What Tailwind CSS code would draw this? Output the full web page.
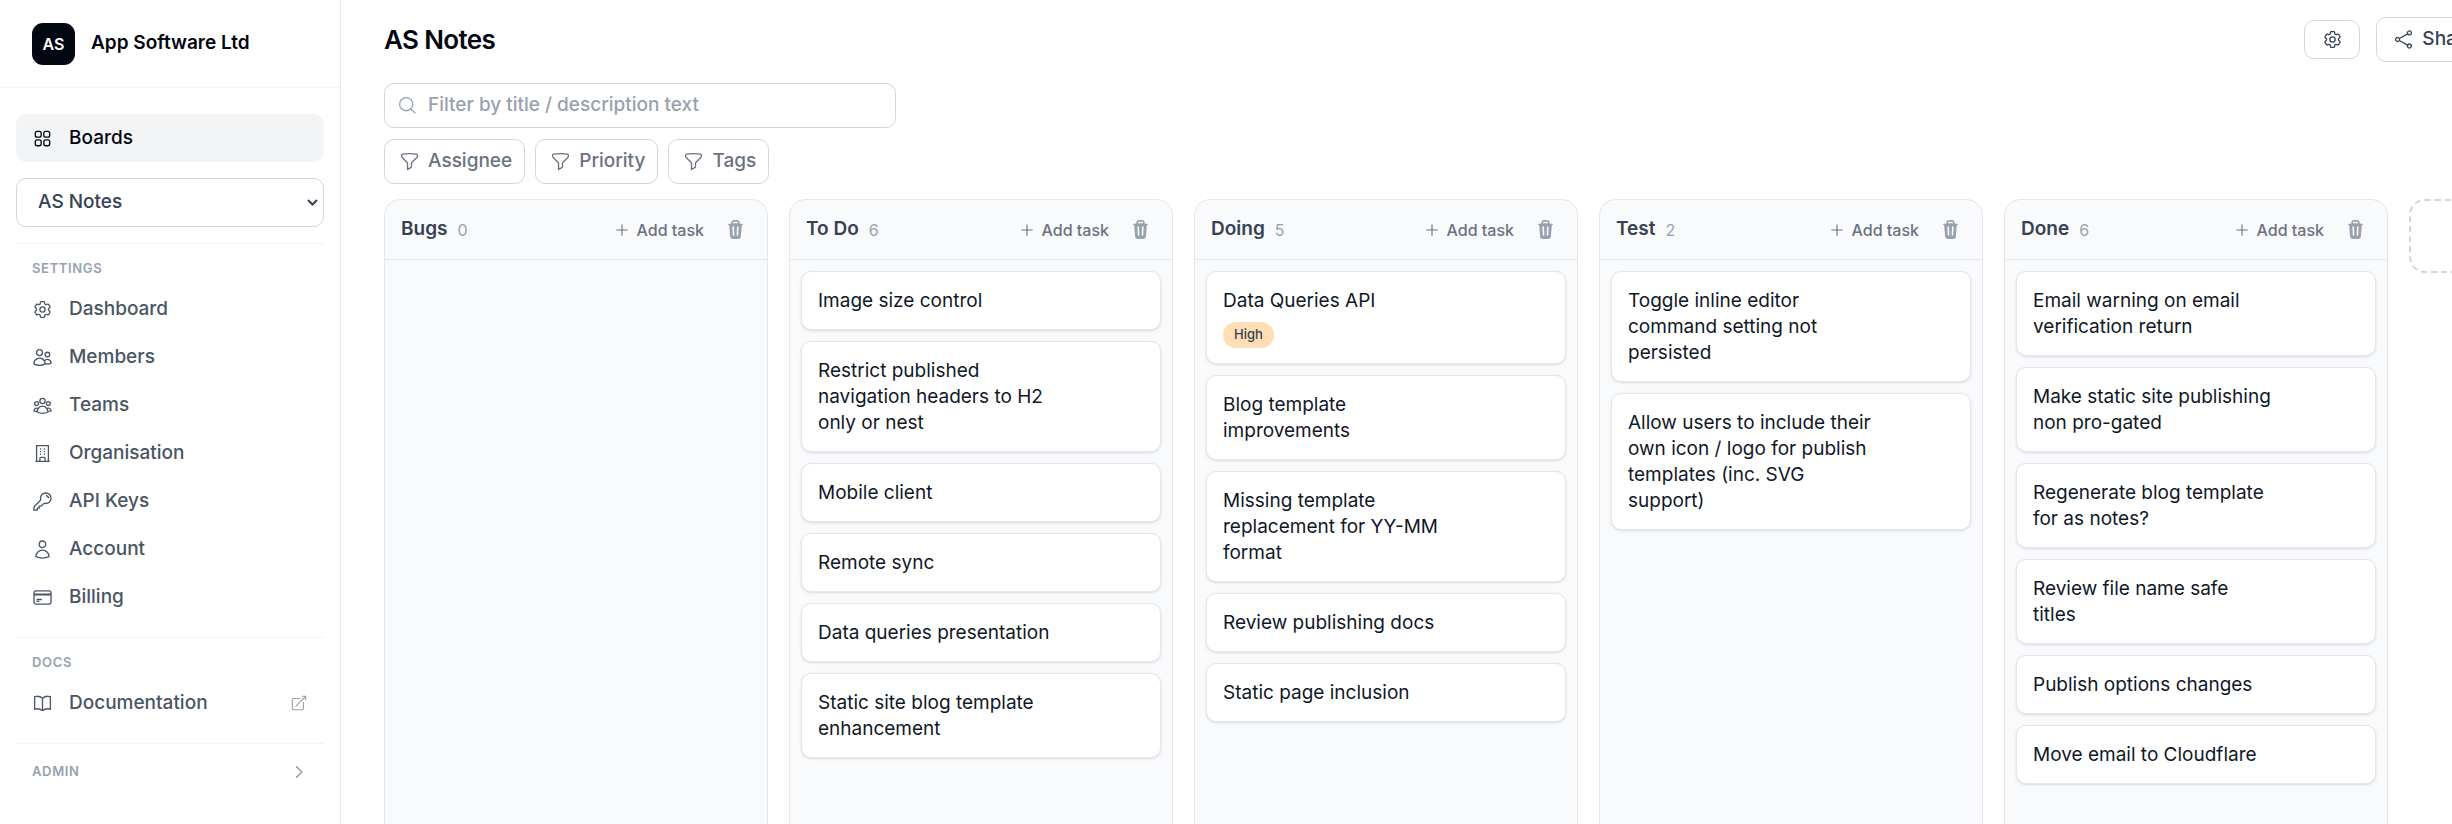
<!DOCTYPE html>
<html lang="en">
<head>
  <meta charset="UTF-8">
  <meta name="viewport" content="width=device-width, initial-scale=1.0">
  <title>AS Notes</title>
  <script src="https://cdn.jsdelivr.net/npm/@tailwindcss/browser@4"></script>
</head>
<body class="h-screen flex overflow-hidden bg-white font-['Inter',sans-serif] text-[19px] text-gray-950">

  <!-- Icon sprite -->
  <svg class="hidden" aria-hidden="true">
    <symbol id="i-grid" viewBox="0 0 24 24"><path d="M3.75 6A2.25 2.25 0 0 1 6 3.75h2.25A2.25 2.25 0 0 1 10.5 6v2.25a2.25 2.25 0 0 1-2.25 2.25H6a2.25 2.25 0 0 1-2.25-2.25V6ZM3.75 15.75A2.25 2.25 0 0 1 6 13.5h2.25a2.25 2.25 0 0 1 2.25 2.25V18a2.25 2.25 0 0 1-2.25 2.25H6A2.25 2.25 0 0 1 3.75 18v-2.25ZM13.5 6a2.25 2.25 0 0 1 2.25-2.25H18A2.25 2.25 0 0 1 20.25 6v2.25A2.25 2.25 0 0 1 18 10.5h-2.25a2.25 2.25 0 0 1-2.25-2.25V6ZM13.5 15.75a2.25 2.25 0 0 1 2.25-2.25H18a2.25 2.25 0 0 1 2.25 2.25V18A2.25 2.25 0 0 1 18 20.25h-2.25A2.25 2.25 0 0 1 13.5 18v-2.25Z"/></symbol>
    <symbol id="i-cog" viewBox="0 0 24 24"><path d="M9.594 3.94c.09-.542.56-.94 1.11-.94h2.593c.55 0 1.02.398 1.11.94l.213 1.281c.063.374.313.686.645.87.074.04.147.083.22.127.325.196.72.257 1.075.124l1.217-.456a1.125 1.125 0 0 1 1.37.49l1.296 2.247a1.125 1.125 0 0 1-.26 1.431l-1.003.827c-.293.241-.438.613-.43.992a7.723 7.723 0 0 1 0 .255c-.008.378.137.75.43.991l1.004.827c.424.35.534.955.26 1.43l-1.298 2.247a1.125 1.125 0 0 1-1.369.491l-1.217-.456c-.355-.133-.75-.072-1.076.124a6.47 6.47 0 0 1-.22.128c-.331.183-.581.495-.644.869l-.213 1.281c-.09.543-.56.94-1.11.94h-2.594c-.55 0-1.019-.398-1.11-.94l-.213-1.281c-.062-.374-.312-.686-.644-.87a6.52 6.52 0 0 1-.22-.127c-.325-.196-.72-.257-1.076-.124l-1.217.456a1.125 1.125 0 0 1-1.369-.49l-1.297-2.247a1.125 1.125 0 0 1 .26-1.431l1.004-.827c.292-.24.437-.613.43-.991a6.932 6.932 0 0 1 0-.255c.007-.38-.138-.751-.43-.992l-1.004-.827a1.125 1.125 0 0 1-.26-1.43l1.297-2.247a1.125 1.125 0 0 1 1.37-.491l1.216.456c.356.133.751.072 1.076-.124.072-.044.146-.086.22-.128.332-.183.582-.495.644-.869l.214-1.28Z"/><circle cx="12" cy="12" r="3"/></symbol>
    <symbol id="i-users" viewBox="0 0 24 24"><path d="M15 19.128a9.38 9.38 0 0 0 2.625.372 9.337 9.337 0 0 0 4.121-.952 4.125 4.125 0 0 0-7.533-2.493M15 19.128v-.003c0-1.113-.285-2.16-.786-3.07M15 19.128v.106A12.318 12.318 0 0 1 8.624 21c-2.331 0-4.512-.645-6.374-1.766l-.001-.109a6.375 6.375 0 0 1 11.964-3.07M12 6.375a3.375 3.375 0 1 1-6.75 0 3.375 3.375 0 0 1 6.75 0Zm8.25 2.25a2.625 2.625 0 1 1-5.25 0 2.625 2.625 0 0 1 5.25 0Z"/></symbol>
    <symbol id="i-group" viewBox="0 0 24 24"><path d="M18 18.72a9.094 9.094 0 0 0 3.741-.479 3 3 0 0 0-4.682-2.72m.94 3.198.001.031c0 .225-.012.447-.037.666A11.944 11.944 0 0 1 12 21c-2.17 0-4.207-.576-5.963-1.584A6.062 6.062 0 0 1 6 18.719m12 0a5.971 5.971 0 0 0-.941-3.197m0 0A5.995 5.995 0 0 0 12 12.75a5.995 5.995 0 0 0-5.058 2.772m0 0a3 3 0 0 0-4.681 2.72 8.986 8.986 0 0 0 3.74.477m.94-3.197a5.971 5.971 0 0 0-.94 3.197M15 6.75a3 3 0 1 1-6 0 3 3 0 0 1 6 0Zm6 3a2.25 2.25 0 1 1-4.5 0 2.25 2.25 0 0 1 4.5 0Zm-13.5 0a2.25 2.25 0 1 1-4.5 0 2.25 2.25 0 0 1 4.5 0Z"/></symbol>
    <symbol id="i-building" viewBox="0 0 24 24"><path d="M3.75 21h16.5M4.5 3h15M5.25 3v18m13.5-18v18M9 6.75h1.5m-1.5 3h1.5m-1.5 3h1.5m3-6H15m-1.5 3H15m-1.5 3H15M9 21v-3.375c0-.621.504-1.125 1.125-1.125h3.75c.621 0 1.125.504 1.125 1.125V21"/></symbol>
    <symbol id="i-key" viewBox="0 0 24 24"><path d="M15.75 5.25a3 3 0 0 1 3 3m3 0a6 6 0 0 1-7.029 5.912c-.563-.097-1.159.026-1.563.43L10.5 17.25H8.25v2.25H6v2.25H2.25v-2.818c0-.597.237-1.17.659-1.591l6.499-6.499c.404-.404.527-1 .43-1.563A6 6 0 1 1 21.75 8.25Z"/></symbol>
    <symbol id="i-user" viewBox="0 0 24 24"><path d="M15.75 6a3.75 3.75 0 1 1-7.5 0 3.75 3.75 0 0 1 7.5 0ZM4.501 20.118a7.5 7.5 0 0 1 14.998 0A17.933 17.933 0 0 1 12 21.75c-2.676 0-5.216-.584-7.499-1.632Z"/></symbol>
    <symbol id="i-card" viewBox="0 0 24 24"><path d="M2.25 8.25h19.5M2.25 9h19.5m-16.5 5.25h6m-6 2.25h3m-3.75 3h15a2.25 2.25 0 0 0 2.25-2.25V6.75A2.25 2.25 0 0 0 19.5 4.5h-15a2.25 2.25 0 0 0-2.25 2.25v10.5A2.25 2.25 0 0 0 4.5 19.5Z"/></symbol>
    <symbol id="i-book" viewBox="0 0 24 24"><path d="M12 6.042A8.967 8.967 0 0 0 6 3.75c-1.052 0-2.062.18-3 .512v14.25A8.987 8.987 0 0 1 6 18c2.305 0 4.408.867 6 2.292m0-14.25a8.966 8.966 0 0 1 6-2.292c1.052 0 2.062.18 3 .512v14.25A8.987 8.987 0 0 0 18 18a8.967 8.967 0 0 0-6 2.292m0-14.25v14.25"/></symbol>
    <symbol id="i-external" viewBox="0 0 24 24"><path d="M13.5 6H5.25A2.25 2.25 0 0 0 3 8.25v10.5A2.25 2.25 0 0 0 5.25 21h10.5A2.25 2.25 0 0 0 18 18.75V10.5m-10.5 6L21 3m0 0h-5.25M21 3v5.25"/></symbol>
    <symbol id="i-right" viewBox="0 0 24 24"><path d="m8.25 4.5 7.5 7.5-7.5 7.5"/></symbol>
    <symbol id="i-search" viewBox="0 0 24 24"><path d="m21 21-5.197-5.197m0 0A7.5 7.5 0 1 0 5.196 5.196a7.5 7.5 0 0 0 10.607 10.607Z"/></symbol>
    <symbol id="i-funnel" viewBox="0 0 24 24"><path d="M12 3c2.755 0 5.455.232 8.083.678.533.09.917.556.917 1.096v1.044a2.25 2.25 0 0 1-.659 1.591l-5.432 5.432a2.25 2.25 0 0 0-.659 1.591v2.927a2.25 2.25 0 0 1-1.244 2.013L9.75 21v-6.568a2.25 2.25 0 0 0-.659-1.591L3.659 7.409A2.25 2.25 0 0 1 3 5.818V4.774c0-.54.384-1.006.917-1.096A48.32 48.32 0 0 1 12 3Z"/></symbol>
    <symbol id="i-share" viewBox="0 0 24 24"><path d="M7.217 10.907a2.25 2.25 0 1 0 0 2.186m0-2.186c.18.324.283.696.283 1.093s-.103.77-.283 1.093m0-2.186 9.566-5.314m-9.566 7.5 9.566 5.314m0 0a2.25 2.25 0 1 0 3.935 2.186 2.25 2.25 0 0 0-3.935-2.186Zm0-12.814a2.25 2.25 0 1 0 3.933-2.185 2.25 2.25 0 0 0-3.933 2.185Z"/></symbol>
    <symbol id="i-plus" viewBox="0 0 24 24"><path d="M12 4.5v15m7.5-7.5h-15"/></symbol>
    <symbol id="i-trash" viewBox="0 0 20 20"><path fill-rule="evenodd" d="M8.75 1A2.75 2.75 0 0 0 6 3.75v.443c-.795.077-1.584.176-2.365.298a.75.75 0 1 0 .23 1.482l.149-.022.841 10.518A2.75 2.75 0 0 0 7.596 19h4.807a2.75 2.75 0 0 0 2.742-2.53l.841-10.52.149.023a.75.75 0 0 0 .23-1.482A41.03 41.03 0 0 0 14 4.193V3.75A2.75 2.75 0 0 0 11.25 1h-2.5ZM10 4c.84 0 1.673.025 2.5.075V3.75c0-.69-.56-1.25-1.25-1.25h-2.5c-.69 0-1.25.56-1.25 1.25v.325C8.327 4.025 9.16 4 10 4ZM8.58 7.72a.75.75 0 0 0-1.5.06l.3 7.5a.75.75 0 1 0 1.5-.06l-.3-7.5Zm4.34.06a.75.75 0 1 0-1.5-.06l-.3 7.5a.75.75 0 1 0 1.5.06l.3-7.5Z" clip-rule="evenodd"/></symbol>
  </svg>

  <!-- Sidebar -->
  <aside class="w-[341px] shrink-0 border-r border-gray-200">
    <div class="h-[88px] flex items-center gap-4 px-8 border-b border-gray-100">
      <span class="w-[43px] h-[42px] rounded-[11px] bg-gray-950 text-white text-base font-semibold flex items-center justify-center">AS</span>
      <span class="font-semibold">App Software Ltd</span>
    </div>

    <nav class="px-4 pt-[26px] font-medium text-gray-600">
      <a href="#" class="h-12 px-4 flex items-center gap-4 rounded-[10px] bg-gray-100 text-gray-950">
        <svg class="size-[21px] fill-none stroke-current stroke-[1.5]"><use href="#i-grid"/></svg>Boards
      </a>

      <div class="relative mt-4">
        <select aria-label="Board" class="w-full h-[49px] pl-[21px] appearance-none rounded-[10px] border border-gray-300 bg-white text-gray-700">
          <option>AS Notes</option>
        </select>
        <svg class="absolute right-[5px] top-[18px] size-[13px] fill-none stroke-gray-700 stroke-2 pointer-events-none" viewBox="0 0 13 13"><path d="m2 4 4.500 4.500L11 4"/></svg>
      </div>

      <h2 class="mt-4 pt-4 px-4 pb-2 border-t border-gray-100 text-[13px] leading-[17px] font-semibold tracking-wider text-gray-400">SETTINGS</h2>
      <a href="#" class="h-12 px-4 flex items-center gap-4"><svg class="size-[21px] fill-none stroke-current stroke-[1.5]"><use href="#i-cog"/></svg>Dashboard</a>
      <a href="#" class="h-12 px-4 flex items-center gap-4"><svg class="size-[21px] fill-none stroke-current stroke-[1.5]"><use href="#i-users"/></svg>Members</a>
      <a href="#" class="h-12 px-4 flex items-center gap-4"><svg class="size-[21px] fill-none stroke-current stroke-[1.5]"><use href="#i-group"/></svg>Teams</a>
      <a href="#" class="h-12 px-4 flex items-center gap-4"><svg class="size-[21px] fill-none stroke-current stroke-[1.5]"><use href="#i-building"/></svg>Organisation</a>
      <a href="#" class="h-12 px-4 flex items-center gap-4"><svg class="size-[21px] fill-none stroke-current stroke-[1.5]"><use href="#i-key"/></svg>API Keys</a>
      <a href="#" class="h-12 px-4 flex items-center gap-4"><svg class="size-[21px] fill-none stroke-current stroke-[1.5]"><use href="#i-user"/></svg>Account</a>
      <a href="#" class="h-12 px-4 flex items-center gap-4"><svg class="size-[21px] fill-none stroke-current stroke-[1.5]"><use href="#i-card"/></svg>Billing</a>

      <h2 class="mt-4 pt-4 px-4 pb-2 border-t border-gray-100 text-[13px] leading-[17px] font-semibold tracking-wider text-gray-400">DOCS</h2>
      <a href="#" class="h-12 px-4 flex items-center gap-4">
        <svg class="size-[21px] fill-none stroke-current stroke-[1.5]"><use href="#i-book"/></svg>
        <span class="flex-1">Documentation</span>
        <svg class="size-[18px] fill-none stroke-gray-400 stroke-[1.5]"><use href="#i-external"/></svg>
      </a>

      <div class="mt-4 pt-4 border-t border-gray-100">
        <button class="w-full h-6 px-4 flex items-center justify-between text-[13px] font-semibold tracking-wider text-gray-400">
          ADMIN
          <svg class="size-[18px] fill-none stroke-current stroke-2"><use href="#i-right"/></svg>
        </button>
      </div>
    </nav>
  </aside>

  <!-- Board -->
  <main class="flex-1 min-w-0 pl-[43px] overflow-hidden">
    <header class="-mr-10 pt-[17px] flex items-center gap-4">
      <h1 class="mr-auto text-[26px] font-semibold tracking-tight">AS Notes</h1>
      <button aria-label="Board settings" class="w-14 h-[39px] flex items-center justify-center rounded-[10px] border border-gray-300 text-gray-700">
        <svg class="size-[21px] fill-none stroke-current stroke-[1.5]"><use href="#i-cog"/></svg>
      </button>
      <button class="h-[45px] px-4 flex items-center gap-2 rounded-[10px] border border-gray-300 font-medium text-gray-700">
        <svg class="size-[21px] fill-none stroke-current stroke-[1.5]"><use href="#i-share"/></svg>Share
      </button>
    </header>

    <label class="mt-[21px] w-lg h-[45px] px-3 flex items-center gap-[10px] rounded-[10px] border border-gray-300">
      <svg class="size-[21px] fill-none stroke-gray-400 stroke-[1.5]"><use href="#i-search"/></svg>
      <input type="text" aria-label="Filter tasks" placeholder="Filter by title / description text" class="flex-1 font-medium outline-none placeholder:text-gray-400">
    </label>

    <div class="mt-[11px] flex gap-[10px] font-medium text-gray-500">
      <button class="h-[45px] pl-[14px] pr-3 flex items-center gap-2 rounded-[10px] border border-gray-300"><svg class="size-[21px] fill-none stroke-current stroke-[1.5]"><use href="#i-funnel"/></svg>Assignee</button>
      <button class="h-[45px] pl-[14px] pr-3 flex items-center gap-2 rounded-[10px] border border-gray-300"><svg class="size-[21px] fill-none stroke-current stroke-[1.5]"><use href="#i-funnel"/></svg>Priority</button>
      <button class="h-[45px] pl-[14px] pr-3 flex items-center gap-2 rounded-[10px] border border-gray-300"><svg class="size-[21px] fill-none stroke-current stroke-[1.5]"><use href="#i-funnel"/></svg>Tags</button>
    </div>

    <div id="board" class="mt-[15px] flex items-start gap-[21px]"></div>
  </main>

  <script>
    const columns = [
      { name: "Bugs", tasks: [] },
      { name: "To Do", tasks: [
        { title: "Image size control" },
        { title: "Restrict published navigation headers to H2 only or nest" },
        { title: "Mobile client" },
        { title: "Remote sync" },
        { title: "Data queries presentation" },
        { title: "Static site blog template enhancement" },
      ] },
      { name: "Doing", tasks: [
        { title: "Data Queries API", priority: "High" },
        { title: "Blog template improvements" },
        { title: "Missing template replacement for YY-MM format" },
        { title: "Review publishing docs" },
        { title: "Static page inclusion" },
      ] },
      { name: "Test", tasks: [
        { title: "Toggle inline editor command setting not persisted" },
        { title: "Allow users to include their own icon / logo for publish templates (inc. SVG support)" },
      ] },
      { name: "Done", tasks: [
        { title: "Email warning on email verification return" },
        { title: "Make static site publishing non pro-gated" },
        { title: "Regenerate blog template for as notes?" },
        { title: "Review file name safe titles" },
        { title: "Publish options changes" },
        { title: "Move email to Cloudflare" },
      ] },
    ];

    function cardHtml(task) {
      const badge = task.priority
        ? `<span class="mt-2 h-[26px] px-[11px] inline-flex items-center rounded-full bg-[#ffddb5] text-[13px] font-medium text-gray-700">${task.priority}</span>`
        : "";
      return `
        <li class="p-4 pb-[15px] rounded-[10px] border border-gray-200 bg-white shadow-sm">
          <p class="max-w-[243px] leading-[26px] text-gray-900">${task.title}</p>${badge}
        </li>`;
    }

    function columnHtml(column) {
      return `
        <section class="w-96 min-h-screen shrink-0 rounded-2xl border border-gray-200 bg-gray-50">
          <header class="h-[60px] px-4 flex items-center border-b border-gray-200">
            <h2 class="font-semibold text-gray-700">${column.name}</h2>
            <span class="ml-[10px] mr-auto text-base text-gray-400">${column.tasks.length}</span>
            <button class="flex items-center gap-[6px] text-base font-medium text-gray-500">
              <svg class="size-[18px] fill-none stroke-current stroke-[1.5]"><use href="#i-plus"/></svg>Add task
            </button>
            <button aria-label="Delete column" class="ml-[21px] mr-[5px]">
              <svg class="size-[21px] fill-gray-400"><use href="#i-trash"/></svg>
            </button>
          </header>
          <ul class="p-[11px] flex flex-col gap-[11px]">${column.tasks.map(cardHtml).join("")}</ul>
        </section>`;
    }

    // Dashed slot at the end of the row is the drop-in for a new column
    document.getElementById("board").innerHTML =
      columns.map(columnHtml).join("") +
      `<button aria-label="Add column" class="w-96 h-[74px] shrink-0 rounded-2xl border-2 border-dashed border-gray-300"></button>`;
  </script>
</body>
</html>
